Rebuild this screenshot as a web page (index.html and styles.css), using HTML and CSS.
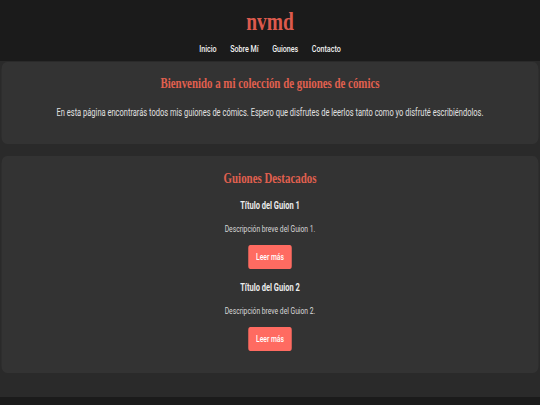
FILE: index.html
```html
<!DOCTYPE html>
<html lang="es">
<head>
<meta charset="utf-8">
<title>nvmd</title>
<link rel="stylesheet" href="styles.css">
</head>
<body>
<div class="page">
  <header class="site-header">
    <h1 class="logo">nvmd</h1>
    <nav class="nav">
      <a href="#">Inicio</a>
      <a href="#">Sobre Mí</a>
      <a href="#">Guiones</a>
      <a href="#">Contacto</a>
    </nav>
  </header>
  <main class="main">
    <section class="card intro">
      <h2 class="card-title">Bienvenido a mi colección de guiones de cómics</h2>
      <p class="lead">En esta página encontrarás todos mis guiones de cómics. Espero que disfrutes de leerlos tanto como yo disfruté escribiéndolos.</p>
    </section>
    <section class="card featured">
      <h2 class="card-title">Guiones Destacados</h2>
      <article class="script">
        <h3 class="script-title">Título del Guion 1</h3>
        <p class="script-desc">Descripción breve del Guion 1.</p>
        <a class="btn" href="#">Leer más</a>
      </article>
      <article class="script">
        <h3 class="script-title">Título del Guion 2</h3>
        <p class="script-desc">Descripción breve del Guion 2.</p>
        <a class="btn" href="#">Leer más</a>
      </article>
    </section>
  </main>
  <footer class="site-footer"></footer>
</div>
</body>
</html>
```
FILE: styles.css
```css
html, body {
  margin: 0;
  padding: 0;
  overflow: hidden;
  background: #2a2a2a;
}
.page {
  width: 720px;
  transform: scaleX(0.75);
  transform-origin: 0 0;
  font-family: Roboto, "Noto Sans", sans-serif;
  color: #e0e0e0;
}
.site-header {
  background: #1b1b1b;
  padding: 6px 0 6px;
  text-align: center;
}
.logo {
  margin: 0;
  font-family: "Liberation Serif", "DejaVu Serif", serif;
  font-weight: 700;
  font-size: 26px;
  line-height: 32px;
  color: #dc5a4d;
}
.nav {
  margin-top: 5px;
  display: flex;
  justify-content: center;
  gap: 18px;
  line-height: 12px;
}
.nav a {
  color: #f0f0f0;
  text-decoration: none;
  font-size: 9.5px;
  font-weight: 500;
}
.main {
  padding: 1px 2px 24px;
  display: flex;
  flex-direction: column;
  gap: 12px;
}
.card {
  background: #333333;
  border-radius: 7px;
  text-align: center;
  padding: 11px 20px 24px;
}
.card-title {
  margin: 0;
  font-family: "Liberation Serif", "DejaVu Serif", serif;
  font-weight: 700;
  font-size: 14.5px;
  line-height: 20px;
  color: #e0604f;
}
.lead {
  margin: 13px 0 0;
  font-size: 10px;
  line-height: 14px;
  color: #e0e0e0;
}
.featured {
  padding-top: 12px;
  padding-bottom: 22px;
}
.script {
  display: flex;
  flex-direction: column;
  align-items: center;
  margin-top: 11px;
}
.script + .script {
  margin-top: 12px;
}
.script-title {
  margin: 0;
  font-size: 10px;
  font-weight: 700;
  line-height: 14px;
  color: #ececec;
}
.script-desc {
  margin: 10px 0 9px;
  font-size: 9px;
  line-height: 13px;
  color: #d8d8d8;
}
.btn {
  display: block;
  background: #ff6b61;
  color: #fff;
  text-decoration: none;
  font-size: 9px;
  font-weight: 500;
  line-height: 13px;
  padding: 5.5px 10px;
  border-radius: 3px;
}
.site-footer {
  background: #1b1b1b;
  height: 40px;
}
```
